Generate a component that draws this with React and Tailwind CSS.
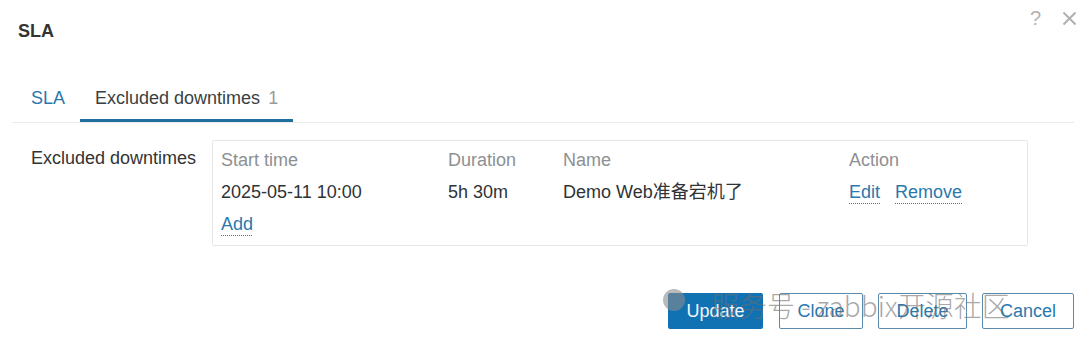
import React from "react";

export default function App() {
  const linkCls =
    "text-[#2a78ad] underline decoration-dotted decoration-[1px] underline-offset-[5px] decoration-[#2a78ad]";
  return (
    <div className="relative w-[1080px] h-[350px] bg-white overflow-hidden font-['Liberation_Sans',Arial,sans-serif] text-[18px] text-[#2f3336]">
      {/* header */}
      <div className="flex justify-between pl-[18px] pr-[3px]">
        <div className="mt-[21px] font-bold leading-[21px] text-[18px] text-[#333]">SLA</div>
        <div className="flex items-center gap-[21px] mt-[7px] h-[22px]">
          <span className="text-[20px] leading-[22px] text-[#b3b3b3]">?</span>
          <svg width="15" height="15" viewBox="0 0 15 15" className="mt-[1px]">
            <path d="M1.5 1.5 L13.5 13.5 M13.5 1.5 L1.5 13.5" stroke="#b0b0b0" strokeWidth="2" />
          </svg>
        </div>
      </div>

      {/* tabs */}
      <div className="mt-[46px] ml-[12px] mr-[6px] pl-[4px] flex border-b border-[#ebebeb]">
        <div className="px-[15px] pb-[10px] leading-[21px] border-b-[3px] border-transparent text-[#2a78ad]">
          SLA
        </div>
        <div className="px-[15px] pb-[10px] leading-[21px] border-b-[3px] border-[#1f6e9c] text-[#3a3f42]">
          Excluded downtimes<span className="ml-[8px] text-[#9a9a9a]">1</span>
        </div>
      </div>

      {/* form row */}
      <div className="flex mt-[17px] pl-[31px]">
        <div className="w-[181px] pt-[2px] leading-[32px] text-[#333]">Excluded downtimes</div>
        <div className="w-[816px] border border-[#e6e6e6] rounded-[2px] pl-[8px] pt-[3px] pb-[5px]">
          <div className="grid grid-cols-[227px_115px_286px_1fr] leading-[32px]">
            <div className="text-[#8d9093]">Start time</div>
            <div className="text-[#8d9093]">Duration</div>
            <div className="text-[#8d9093]">Name</div>
            <div className="text-[#8d9093]">Action</div>

            <div className="text-[#2f3336]">2025-05-11 10:00</div>
            <div className="text-[#2f3336]">5h 30m</div>
            <div className="text-[#2f3336] font-['Liberation_Sans','Noto_Sans_CJK_SC',sans-serif]">
              Demo Web准备宕机了
            </div>
            <div className="flex gap-[15px]">
              <span className={linkCls}>Edit</span>
              <span className={linkCls}>Remove</span>
            </div>

            <div>
              <span className={linkCls}>Add</span>
            </div>
          </div>
        </div>
      </div>

      {/* buttons */}
      <div className="flex justify-end items-center mt-[47px] pr-[6px]">
        <button className="w-[95px] h-[36px] rounded-[2px] bg-[#1172b3] text-[#f2f7fb] text-[18px] leading-none">
          Update
        </button>
        <button className="ml-[16px] w-[84px] h-[36px] rounded-[2px] border border-[#5a8bad] bg-white text-[#2a78ad] text-[18px] leading-none">
          Clone
        </button>
        <button className="ml-[15px] w-[89px] h-[36px] rounded-[2px] border border-[#5a8bad] bg-white text-[#2a78ad] text-[18px] leading-none">
          Delete
        </button>
        <button className="ml-[15px] w-[92px] h-[36px] rounded-[2px] border border-[#5a8bad] bg-white text-[#2a78ad] text-[18px] leading-none">
          Cancel
        </button>
      </div>

      {/* watermark */}
      <div className="absolute left-[663px] top-[290px] flex items-center pointer-events-none">
        <div className="w-[22px] h-[22px] rounded-full bg-[#8c8c8c]/60 -mt-[10px]" />
        <span className="ml-[26px] text-[28px] leading-[30px] font-light text-[#6e6e6e]/60 font-['Noto_Sans_CJK_SC','Noto_Sans',sans-serif] whitespace-nowrap">
          服务号 - zabbix开源社区
        </span>
      </div>
    </div>
  );
}
